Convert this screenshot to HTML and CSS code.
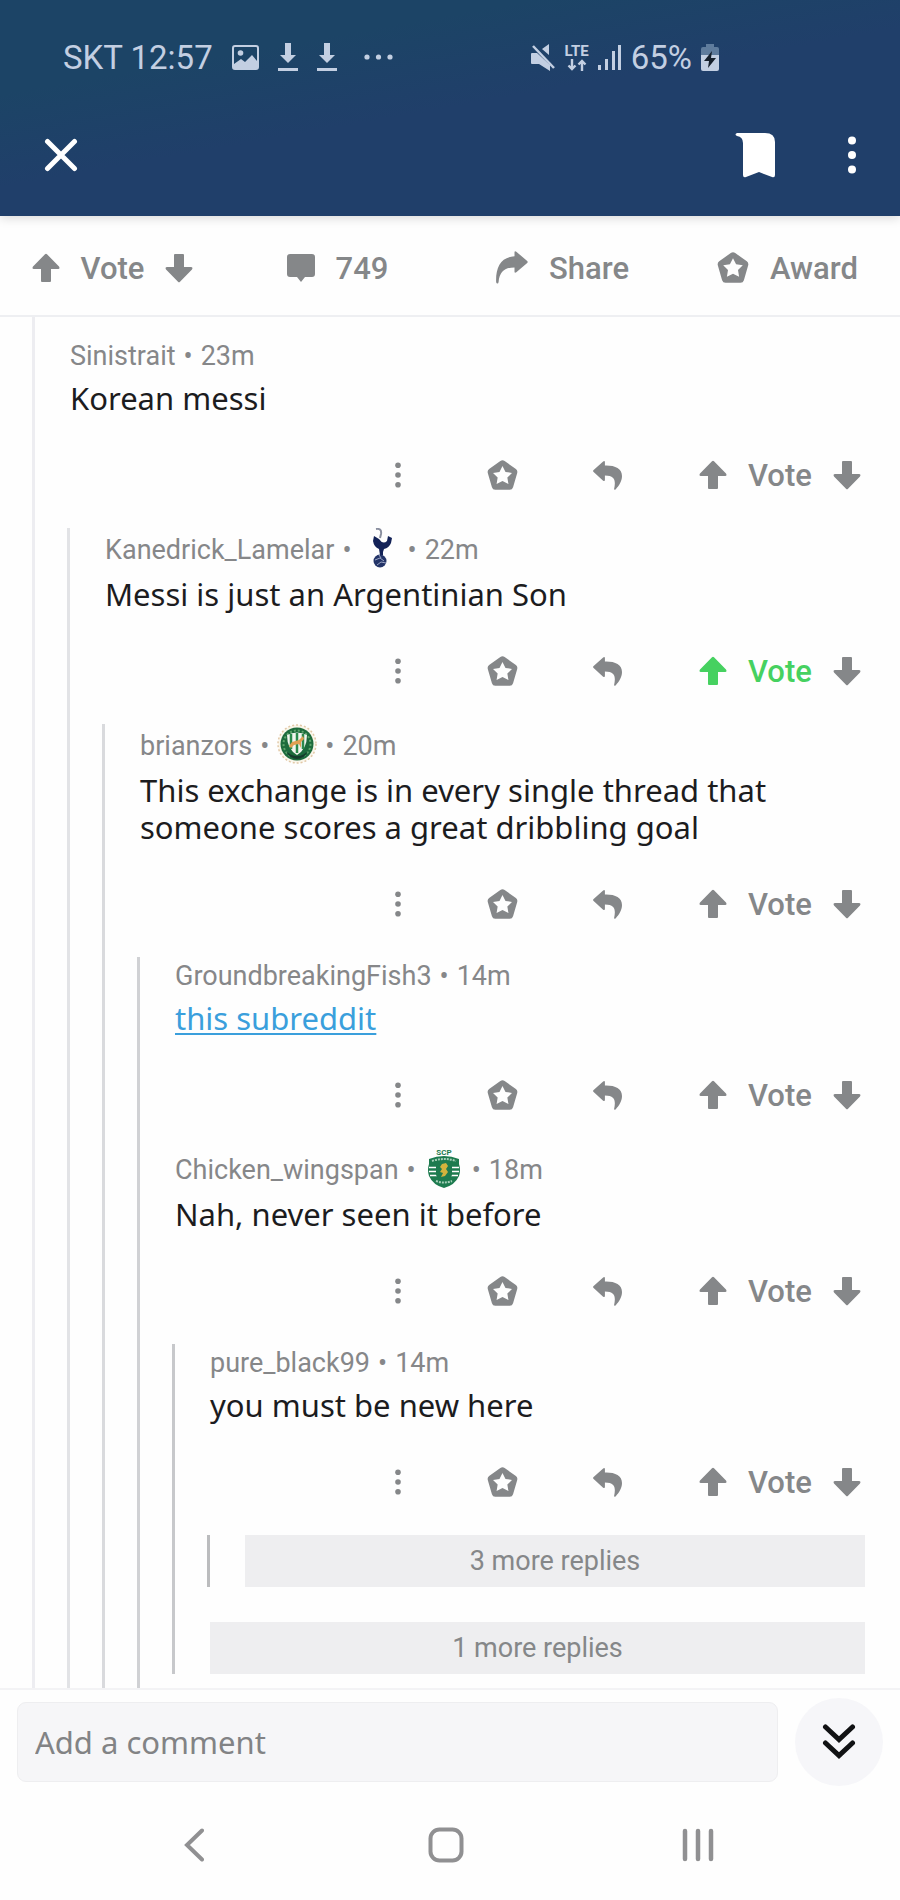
FILE: index.html
```html
<!DOCTYPE html>
<html lang="en">
<head>
    <meta charset="UTF-8">
    <meta name="viewport" content="width=device-width, initial-scale=1.0">
    <title>Comments</title>
    <link rel="stylesheet" href="styles.css">
</head>
<body>
    <!-- shared icons -->
    <svg class="sprite" aria-hidden="true">
        <symbol id="up" viewBox="0 0 28 30">
            <path d="M13 1.3q1-1 2 0L27 13.6q1.3 2-.8 2.4H19v12q0 1-1 1H10q-1 0-1-1V16H1.800q-2.100-.4-.8-2.400z"/>
        </symbol>
        <symbol id="down" viewBox="0 0 28 30">
            <path d="M13 28.700q1 1 2 0L27 16.400q1.300-2-.8-2.400H19V2q0-1-1-1H10q-1 0-1 1v12H1.800q-2.100.4-.8 2.400z"/>
        </symbol>
        <symbol id="chat" viewBox="0 0 28 28">
            <path d="M3 0h22q3 0 3 3v17q0 3-3 3h-7l-4 5-4-5H3q-3 0-3-3V3q0-3 3-3z"/>
        </symbol>
        <symbol id="share" viewBox="0 0 32 33">
            <path d="M18.500 1.500q0-2 1.800-.8L31.200 10q1 1 0 2L20.300 21.300q-1.800 1.200-1.800-.8v-4C9 16.500 3.500 20.500 2.600 31q-.3 1.800-1.600 1.500-.9-.3-.9-2C-.2 15 5.500 6 18.500 5.300z"/>
        </symbol>
        <symbol id="reply" viewBox="0 0 28 28">
            <path d="M9.800.400q1.700-1 1.700.800V4.300C21 4 28 7 28 14.500c0 5-3 9.500-6 12.700q-1.800 1.500-1.600-.4C21.800 20 22 14 11.500 14v4.200q0 1.800-1.700.8L.600 10.700q-1.100-1 0-2z"/>
        </symbol>
        <symbol id="award" viewBox="0 0 32 32">
            <path fill-rule="evenodd" d="M13.800 1q2.200-1.400 4.400 0l11.600 8.300q2 1.500 1.400 4l-4.300 14.900q-.8 2.600-3.400 2.600H8.500q-2.600 0-3.400-2.600L.8 13.300q-.6-2.500 1.400-4zM16 6.200l-3.100 6.100-6.700 1 4.800 4.800-1.100 6.700 6.100-3.100 6.100 3.100-1.100-6.700 4.800-4.800-6.700-1z"/>
        </symbol>
        <symbol id="more" viewBox="0 0 6 26">
            <circle cx="3" cy="3.300" r="2.800"/><circle cx="3" cy="13" r="2.800"/><circle cx="3" cy="22.700" r="2.800"/>
        </symbol>
        <symbol id="download" viewBox="0 0 20 28">
            <path d="M7 0h6v12h5L10 20 2 12h5zM0 25h20v3H0z"/>
        </symbol>
    </svg>

    <header class="header">
        <div class="status">
            <div class="status-left">
                <span>SKT 12:57</span>
                <svg width="27" height="25" viewBox="0 0 27 25"><path fill-rule="evenodd" d="M3 0h21q3 0 3 3v19q0 3-3 3H3q-3 0-3-3V3q0-3 3-3zM3 2q-1 0-1 1v16l7-5 4 3 7-7 5 6V3q0-1-1-1z"/><circle cx="8.500" cy="8" r="2.800"/></svg>
                <svg width="20" height="28"><use href="#download"/></svg>
                <svg width="20" height="28"><use href="#download"/></svg>
                <svg class="status-dots" width="29" height="6" viewBox="0 0 29 6"><circle cx="3" cy="3" r="2.600"/><circle cx="14.500" cy="3" r="2.600"/><circle cx="26" cy="3" r="2.600"/></svg>
            </div>
            <div class="status-right">
                <svg width="25" height="27" viewBox="0 0 25 27"><path d="M1 9h5l13 12v6L8 20H1q-1 0-1-1v-9q0-1 1-1zM18 0v11l-7-6z"/><path d="M2 2l21 22" fill="none" stroke="#c3cfe2" stroke-width="2.500"/></svg>
                <span class="lte">
                    <span>LTE</span>
                    <svg width="20" height="12" viewBox="0 0 20 12"><path d="M5 0v10M1.500 6.500L5 10l3.500-3.500M15 12V2M11.500 5.500L15 2l3.500 3.500" fill="none" stroke="#c3cfe2" stroke-width="2.400"/></svg>
                </span>
                <svg width="24" height="25" viewBox="0 0 24 25"><path d="M0 20h3v5H0zM7 14h3v11H7zM14 6h3v19h-3zM20 0h3v25h-3z"/></svg>
                <span>65%</span>
                <svg width="18" height="27" viewBox="0 0 18 27"><path d="M5 0h8v3h3q2 0 2 2v6H0V5q0-2 2-2h3z" fill="#5f7c9d"/><path d="M0 11h18v14q0 2-2 2H2q-2 0-2-2z"/><path d="M11 7L3 17h5l-1 7 8-10h-5z" fill="#16202c"/></svg>
            </div>
        </div>
        <div class="appbar">
            <button class="icon-btn" aria-label="Close">
                <svg width="34" height="34" viewBox="0 0 34 34"><path d="M3.500 3.500l27 27M30.500 3.500l-27 27" fill="none" stroke="#fff" stroke-width="5" stroke-linecap="round"/></svg>
            </button>
            <div class="appbar-right">
                <button class="icon-btn" aria-label="Save">
                    <svg width="40" height="45" viewBox="0 0 40 45"><path d="M2 0h28q10 0 10 9v33q0 3-3 2l-13-5-13 5q-3 1-3-2V10Q8 4 2 3q-3-1.500 0-3z"/></svg>
                </button>
                <button class="icon-btn" aria-label="More options">
                    <svg width="8" height="38" viewBox="0 0 8 38"><circle cx="4" cy="4.500" r="4"/><circle cx="4" cy="19" r="4"/><circle cx="4" cy="33.500" r="4"/></svg>
                </button>
            </div>
        </div>
    </header>

    <div class="post-actions">
        <div class="group">
            <button class="group" aria-label="Upvote post"><svg width="28" height="30"><use href="#up"/></svg><span>Vote</span></button>
            <button aria-label="Downvote post"><svg width="28" height="30"><use href="#down"/></svg></button>
        </div>
        <button class="group"><svg width="28" height="28"><use href="#chat"/></svg><span>749</span></button>
        <button class="group"><svg width="32" height="33"><use href="#share"/></svg><span>Share</span></button>
        <button class="group"><svg width="32" height="32"><use href="#award"/></svg><span>Award</span></button>
    </div>

    <main class="comments">
        <div class="thread depth-1">
            <article class="comment">
                <div class="meta"><span>Sinistrait</span><span>•</span><span>23m</span></div>
                <p>Korean messi</p>
                <div class="actions">
                    <button aria-label="More"><svg width="6" height="26"><use href="#more"/></svg></button>
                    <button aria-label="Award"><svg width="31" height="31"><use href="#award"/></svg></button>
                    <button aria-label="Reply"><svg width="29" height="29"><use href="#reply"/></svg></button>
                    <div class="votes">
                        <button class="group" aria-label="Upvote"><svg width="28" height="30"><use href="#up"/></svg><span>Vote</span></button>
                        <button aria-label="Downvote"><svg width="28" height="30"><use href="#down"/></svg></button>
                    </div>
                </div>
            </article>

            <div class="thread depth-2">
                <article class="comment">
                    <div class="meta">
                        <span>Kanedrick_Lamelar</span><span>•</span>
                        <svg class="flair" viewBox="0 0 40 40" role="img" aria-label="Tottenham">
                            <path d="M16 1q6-1 5 5l-1 4" fill="none" stroke="#8a8f9f" stroke-width="2"/>
                            <path d="M14 8l5 3q4 6 8 2l1-5 4 2-1 5q-2 5-7 6l-2 6h-2l-1-6q-5-2-6-8z" fill="#132257"/>
                            <path d="M22 19v8" stroke="#132257" stroke-width="2"/>
                            <circle cx="20" cy="33" r="6.500" fill="#233468"/>
                            <path d="M15 32l5-2 4 3M17 37l4-3 5 1M19 27l2 3" fill="none" stroke="#9ba5c4"/>
                        </svg>
                        <span>•</span><span>22m</span>
                    </div>
                    <p>Messi is just an Argentinian Son</p>
                    <div class="actions">
                        <button aria-label="More"><svg width="6" height="26"><use href="#more"/></svg></button>
                        <button aria-label="Award"><svg width="31" height="31"><use href="#award"/></svg></button>
                        <button aria-label="Reply"><svg width="29" height="29"><use href="#reply"/></svg></button>
                        <div class="votes">
                            <button class="group upvoted" aria-label="Upvote"><svg width="28" height="30"><use href="#up"/></svg><span>Vote</span></button>
                            <button aria-label="Downvote"><svg width="28" height="30"><use href="#down"/></svg></button>
                        </div>
                    </div>
                </article>

                <div class="thread depth-3">
                    <article class="comment">
                        <div class="meta">
                            <span>brianzors</span><span>•</span>
                            <svg class="flair" viewBox="0 0 40 40" role="img" aria-label="Club crest">
                                <circle cx="20" cy="20" r="19" fill="#faf6ea" stroke="#e2c9a8" stroke-width="1.500" stroke-dasharray="2 2"/>
                                <circle cx="20" cy="20" r="16.500" fill="#1d6b3c"/>
                                <circle cx="20" cy="20" r="13.500" fill="none" stroke="#5fa66c" stroke-width="2" stroke-dasharray="2 2"/>
                                <path d="M10 11q10-5 20 0 0 14-10 20-10-6-10-20z" fill="#f2f5ee"/>
                                <path d="M14 10v15M20 9v20M26 10v15" stroke="#2c8a4c" stroke-width="2.500"/>
                                <path d="M12 22l3-4 7-2 4-4 1 3-3 3v6l-2-4-5 1-3 3z" fill="#e2a052"/>
                                <path d="M9 27q4 8 11 8t11-8q-5 5-11 5T9 27z" fill="#143b2b"/>
                            </svg>
                            <span>•</span><span>20m</span>
                        </div>
                        <p>This exchange is in every single thread that someone scores a great dribbling goal</p>
                        <div class="actions">
                            <button aria-label="More"><svg width="6" height="26"><use href="#more"/></svg></button>
                            <button aria-label="Award"><svg width="31" height="31"><use href="#award"/></svg></button>
                            <button aria-label="Reply"><svg width="29" height="29"><use href="#reply"/></svg></button>
                            <div class="votes">
                                <button class="group" aria-label="Upvote"><svg width="28" height="30"><use href="#up"/></svg><span>Vote</span></button>
                                <button aria-label="Downvote"><svg width="28" height="30"><use href="#down"/></svg></button>
                            </div>
                        </div>
                    </article>

                    <div class="thread depth-4">
                        <article class="comment">
                            <div class="meta"><span>GroundbreakingFish3</span><span>•</span><span>14m</span></div>
                            <p><a href="#">this subreddit</a></p>
                            <div class="actions">
                                <button aria-label="More"><svg width="6" height="26"><use href="#more"/></svg></button>
                                <button aria-label="Award"><svg width="31" height="31"><use href="#award"/></svg></button>
                                <button aria-label="Reply"><svg width="29" height="29"><use href="#reply"/></svg></button>
                                <div class="votes">
                                    <button class="group" aria-label="Upvote"><svg width="28" height="30"><use href="#up"/></svg><span>Vote</span></button>
                                    <button aria-label="Downvote"><svg width="28" height="30"><use href="#down"/></svg></button>
                                </div>
                            </div>
                        </article>

                        <article class="comment">
                            <div class="meta">
                                <span>Chicken_wingspan</span><span>•</span>
                                <svg class="flair" viewBox="0 0 40 40" role="img" aria-label="Sporting">
                                    <text class="crest-text" x="20" y="7" text-anchor="middle">SCP</text>
                                    <path d="M5 11q15-6 30 0v5q2 6 0 12-4 9-15 12-11-3-15-12-2-6 0-12z" fill="#1d7b4f"/>
                                    <path d="M5 19.500h30M5 23.500h30M6 27.500h28" stroke="#fff" stroke-width="1.500"/>
                                    <path d="M12 15h16v12q-2 5-8 7-6-2-8-7z" fill="#1d7b4f"/>
                                    <path d="M8 13q12-4 24 0M12 33q8 3 16 0" fill="none" stroke="#a5cfb8" stroke-width="2" stroke-dasharray="2 1"/>
                                    <path d="M18 16l4-1 2 3-2 3 2 3-3 4-4 1 2-4-3-1 2-3-2-2z" fill="#d3b33d"/>
                                </svg>
                                <span>•</span><span>18m</span>
                            </div>
                            <p>Nah, never seen it before</p>
                            <div class="actions">
                                <button aria-label="More"><svg width="6" height="26"><use href="#more"/></svg></button>
                                <button aria-label="Award"><svg width="31" height="31"><use href="#award"/></svg></button>
                                <button aria-label="Reply"><svg width="29" height="29"><use href="#reply"/></svg></button>
                                <div class="votes">
                                    <button class="group" aria-label="Upvote"><svg width="28" height="30"><use href="#up"/></svg><span>Vote</span></button>
                                    <button aria-label="Downvote"><svg width="28" height="30"><use href="#down"/></svg></button>
                                </div>
                            </div>
                        </article>

                        <div class="thread depth-5">
                            <article class="comment">
                                <div class="meta"><span>pure_black99</span><span>•</span><span>14m</span></div>
                                <p>you must be new here</p>
                                <div class="actions">
                                    <button aria-label="More"><svg width="6" height="26"><use href="#more"/></svg></button>
                                    <button aria-label="Award"><svg width="31" height="31"><use href="#award"/></svg></button>
                                    <button aria-label="Reply"><svg width="29" height="29"><use href="#reply"/></svg></button>
                                    <div class="votes">
                                        <button class="group" aria-label="Upvote"><svg width="28" height="30"><use href="#up"/></svg><span>Vote</span></button>
                                        <button aria-label="Downvote"><svg width="28" height="30"><use href="#down"/></svg></button>
                                    </div>
                                </div>
                            </article>
                            <div class="thread depth-6">
                                <div class="more"><button class="more-btn">3 more replies</button></div>
                            </div>
                            <div class="more"><button class="more-btn">1 more replies</button></div>
                        </div>
                    </div>
                </div>
            </div>
        </div>
    </main>

    <footer>
        <div class="reply-bar">
            <input class="reply-input" type="text" placeholder="Add a comment" aria-label="Add a comment">
            <button class="next-btn" aria-label="Next comment">
                <svg width="34" height="38" viewBox="0 0 34 38"><path d="M3.500 4L17 16.500 30.500 4M3.500 20L17 32.500 30.500 20" fill="none" stroke="#111214" stroke-width="5" stroke-linecap="round"/></svg>
            </button>
        </div>
        <nav class="nav">
            <button aria-label="Back"><svg width="20" height="34" viewBox="0 0 20 34"><path d="M18 2.500L3 17l15 14.500" fill="none" stroke="#909092" stroke-width="4" stroke-linecap="round"/></svg></button>
            <button aria-label="Home"><svg width="36" height="36" viewBox="0 0 36 36"><rect x="2.500" y="2.500" width="31" height="31" rx="9" fill="none" stroke="#909092" stroke-width="4"/></svg></button>
            <button aria-label="Recent apps"><svg width="32" height="34" viewBox="0 0 32 34"><path d="M3 3v28M16 3v28M29 3v28" stroke="#909092" stroke-width="4.500" stroke-linecap="round"/></svg></button>
        </nav>
    </footer>
</body>
</html>
```
FILE: styles.css
```css
* {
    box-sizing: border-box;
}
body {
    margin: 0;
    min-height: 100vh;
    display: flex;
    flex-direction: column;
    background-color: #fefefe;
    color: #1c1c1e;
    font-family: "Noto Sans", sans-serif;
    font-size: 31px;
    line-height: 37px;
}
svg {
    display: block;
    flex-shrink: 0;
    fill: currentColor;
}
button {
    display: flex;
    align-items: center;
    justify-content: center;
    padding: 0;
    border: none;
    background: none;
    color: #858789;
    font-family: Roboto, sans-serif;
    font-size: 31px;
    font-weight: 500;
    line-height: 36px;
    cursor: pointer;
}
.sprite {
    position: absolute;
    width: 0;
    height: 0;
}

/* header */
.header {
    position: relative;
    padding-bottom: 20px;
    background: linear-gradient(170deg, #1c4466 25%, #203f6a 50%);
    box-shadow: 0 2px 10px rgba(0, 0, 0, 0.15);
}
.status {
    display: flex;
    justify-content: space-between;
    height: 114px;
    padding: 0 181px 0 63px;
    color: #c3cfe2;
    font-family: Roboto, sans-serif;
    font-size: 33px;
}
.status-left, .status-right {
    display: flex;
    align-items: center;
}
.status-left {
    gap: 19px;
}
.status-dots {
    margin-left: 8px;
}
.status-right {
    gap: 9px;
}
.lte {
    display: flex;
    flex-direction: column;
    align-items: center;
    font-size: 15px;
    font-weight: 700;
    line-height: 15px;
}
.appbar {
    display: flex;
    align-items: center;
    justify-content: space-between;
    height: 82px;
    padding: 0 44px;
}
.appbar-right {
    display: flex;
    align-items: center;
    gap: 73px;
}
.icon-btn {
    color: #fff;
}

/* post actions */
.post-actions {
    display: grid;
    grid-template-columns: repeat(4, 1fr);
    height: 101px;
    padding-top: 4px;
    border-bottom: 2px solid #eeeff2;
}
.group {
    display: flex;
    align-items: center;
    justify-content: center;
    gap: 21px;
}
.group span {
    padding-top: 2px;
}

/* comments */
.comments {
    flex: 1;
    display: flex;
    flex-direction: column;
    padding-right: 35px;
}
.thread {
    margin-left: 32px;
    border-left: 3px solid #ededf1;
}
.depth-1 {
    flex: 1;
    padding-top: 20px;
}
.depth-2 {
    border-color: #e2e3e6;
}
.depth-3 {
    border-color: #d9dadd;
}
.depth-4 {
    border-color: #d0d1d4;
    padding-bottom: 14px;
}
.depth-5 {
    border-color: #c7c8cb;
}
.depth-6 {
    border-color: #bbbcbe;
    margin-bottom: 35px;
}
.comment {
    padding-left: 35px;
}
.meta {
    display: flex;
    align-items: center;
    gap: 8px;
    min-height: 35px;
    margin-bottom: 8px;
    color: #868789;
    font-family: Roboto, sans-serif;
    font-size: 27px;
    line-height: 32px;
}
.meta span {
    padding-top: 3px;
}
.flair {
    width: 40px;
    height: 40px;
}
.crest-text {
    fill: #1d7b4f;
    font-family: Roboto, sans-serif;
    font-size: 8px;
    font-weight: 700;
}
.comment p {
    margin: 0;
}
.comment a {
    color: #3a9fdc;
    text-decoration-thickness: 2px;
    text-underline-offset: 3px;
}
.actions {
    display: flex;
    justify-content: flex-end;
    height: 106px;
    margin-top: 5px;
}
.actions > button {
    width: 105px;
}
.votes {
    display: flex;
    justify-content: space-between;
    width: 205px;
    padding: 0 4px 0 39px;
}
.votes .upvoted {
    color: #46d160;
}
.more {
    padding-left: 35px;
}
.more-btn {
    width: 100%;
    height: 52px;
    background-color: #eeeef0;
    font-size: 27px;
    font-weight: 400;
}

/* bottom bars */
.reply-bar {
    display: flex;
    align-items: center;
    gap: 17px;
    padding: 8px 17px 0;
    border-top: 2px solid #f3f3f5;
}
.reply-input {
    flex: 1;
    min-width: 0;
    height: 80px;
    padding: 0 17px;
    border: 1px solid #eeeef0;
    border-radius: 9px;
    background-color: #f6f6f8;
    font-family: "Noto Sans", sans-serif;
    font-size: 31px;
}
.reply-input::placeholder {
    color: #828385;
}
.next-btn {
    width: 88px;
    height: 88px;
    border-radius: 50%;
    background-color: #f6f6f9;
}
.nav {
    display: grid;
    grid-template-columns: repeat(3, 1fr);
    height: 114px;
    padding: 4px 76px 0 68px;
}
```
